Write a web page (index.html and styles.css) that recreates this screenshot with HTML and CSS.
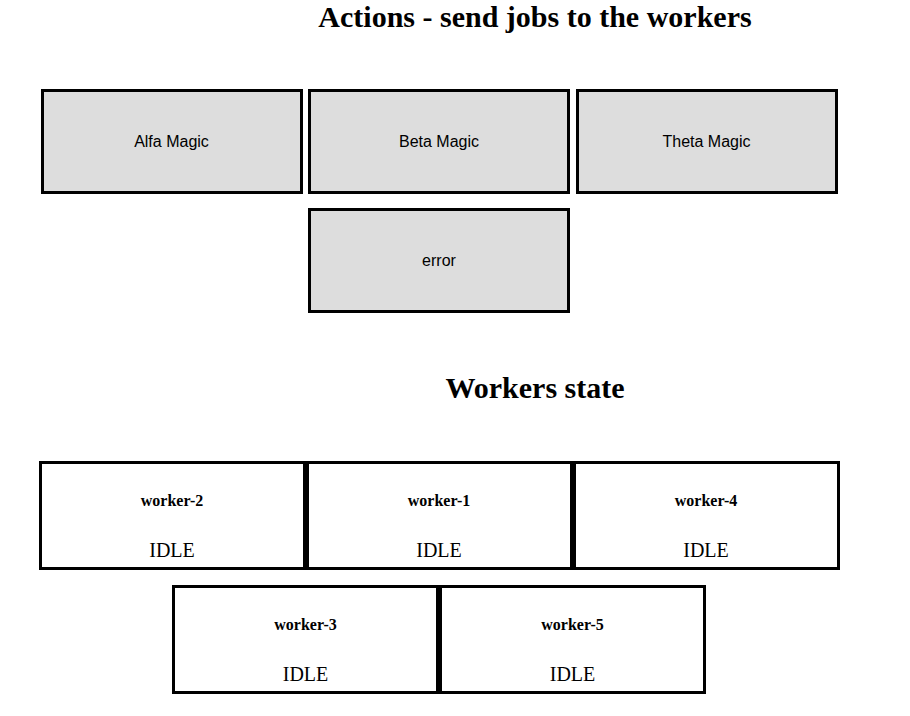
FILE: index.html
```html
<!DOCTYPE html>
<html>
<head>
<meta charset="utf-8">
<title>Workers</title>
<link rel="stylesheet" href="styles.css">
</head>
<body>
<div class="page">
  <h1 class="title">Actions - send jobs to the workers</h1>
  <div class="actions">
    <div class="row btn-row">
      <button class="action">Alfa Magic</button>
      <button class="action">Beta Magic</button>
      <button class="action">Theta Magic</button>
    </div>
    <div class="row btn-row">
      <button class="action">error</button>
    </div>
  </div>
  <h1 class="title title-workers">Workers state</h1>
  <div class="workers">
    <div class="row">
      <div class="worker"><div class="name">worker-2</div><div class="state">IDLE</div></div>
      <div class="worker"><div class="name">worker-1</div><div class="state">IDLE</div></div>
      <div class="worker"><div class="name">worker-4</div><div class="state">IDLE</div></div>
    </div>
    <div class="row">
      <div class="worker"><div class="name">worker-3</div><div class="state">IDLE</div></div>
      <div class="worker"><div class="name">worker-5</div><div class="state">IDLE</div></div>
    </div>
  </div>
</div>
</body>
</html>
```
FILE: styles.css
```css
html, body {
  margin: 0;
  padding: 0;
  background: #fff;
  color: #000;
  font-family: "Liberation Serif", "Times New Roman", serif;
}
.page {
  width: 878px;
}
.title {
  margin: 0 0 0 192px;
  font-size: 30px;
  line-height: 33px;
  font-weight: bold;
  text-align: center;
}
.actions {
  margin-top: 56px;
  display: flex;
  flex-direction: column;
  gap: 14px;
}
.row {
  display: flex;
  justify-content: center;
}
.btn-row {
  gap: 5.5px;
}
.action {
  box-sizing: border-box;
  width: 262px;
  height: 105px;
  margin: 0;
  padding: 0;
  border: 3px solid #000;
  background: #dddddd;
  color: #000;
  font-family: "Liberation Sans", Arial, sans-serif;
  font-size: 16px;
}
.title-workers {
  margin-top: 58px;
}
.workers {
  margin-top: 57px;
  display: flex;
  flex-direction: column;
  gap: 15px;
}
.worker {
  box-sizing: border-box;
  width: 267px;
  height: 109px;
  border: 3px solid #000;
  padding-top: 28px;
  text-align: center;
}
.name {
  font-size: 16px;
  line-height: 18px;
  font-weight: bold;
}
.state {
  margin-top: 28.5px;
  font-size: 20px;
  line-height: 22px;
}
```
